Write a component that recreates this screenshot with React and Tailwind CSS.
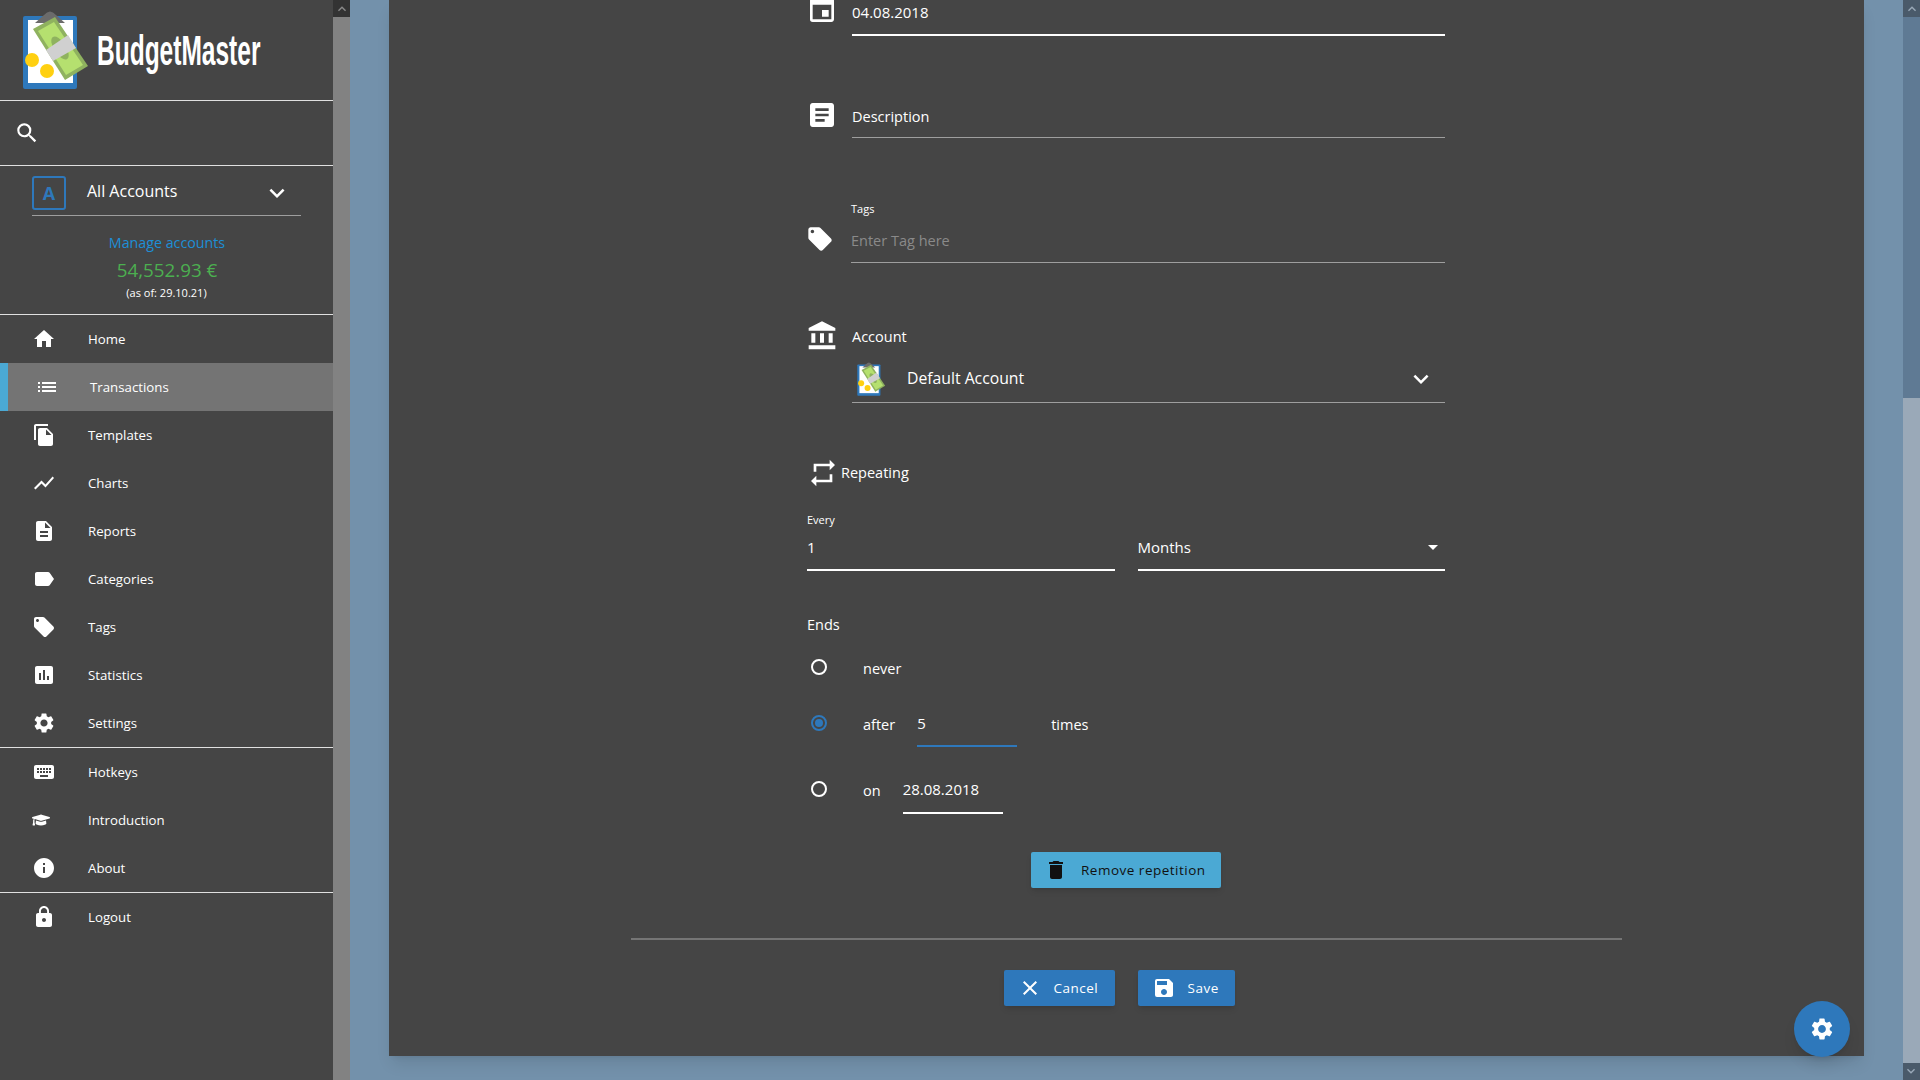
import React from "react";
import {
  MdHome, MdList, MdFileCopy, MdShowChart, MdDescription, MdLabel, MdLocalOffer,
  MdInsertChart, MdSettings, MdKeyboard, MdInfo, MdLock, MdSearch, MdExpandMore,
  MdEvent, MdArticle, MdAccountBalance, MdRepeat, MdArrowDropDown, MdDelete, MdClear, MdSave,
  MdKeyboardArrowUp,
} from "react-icons/md";
import { FaGraduationCap } from "react-icons/fa";

const mainNav = [
  { label: "Home", icon: MdHome },
  { label: "Transactions", icon: MdList, active: true },
  { label: "Templates", icon: MdFileCopy },
  { label: "Charts", icon: MdShowChart },
  { label: "Reports", icon: MdDescription },
  { label: "Categories", icon: MdLabel },
  { label: "Tags", icon: MdLocalOffer },
  { label: "Statistics", icon: MdInsertChart },
  { label: "Settings", icon: MdSettings },
];

const helpNav = [
  { label: "Hotkeys", icon: MdKeyboard },
  { label: "Introduction", icon: FaGraduationCap, small: true },
  { label: "About", icon: MdInfo },
];

// clipboard with banknote, coordinates taken from the header logo
function Logo({ className }) {
  return (
    <svg viewBox="20 8 70 84" className={className}>
      <rect x="23" y="16" width="54" height="73" rx="2" fill="#2e78bb" />
      <rect x="28" y="20" width="45" height="63" fill="#ffffff" />
      <path d="M35 23 L44 15 Q50 8 56 15 L65 23 Z" fill="#6b6b6b" />
      <circle cx="32" cy="60" r="7" fill="#ffd011" />
      <circle cx="47" cy="71" r="7" fill="#ffd011" />
      <path d="M33 29 L55 17 L88 66 L65 80 Z" fill="#8fb25f" />
      <path d="M38 31 L54 22 L83 65 L66 75 Z" fill="#b5e06f" />
      <ellipse cx="60" cy="48" rx="6" ry="13" transform="rotate(-33 60 48)" fill="#8fb25f" />
      <path d="M46 50 L68 35 L76 48 L53 61 Z" fill="#d0d0d0" />
    </svg>
  );
}

function NavItem({ item }) {
  const Icon = item.icon;
  return (
    <a
      className={`flex h-[48px] items-center text-[13.25px] font-medium text-white ${
        item.active ? "border-l-[8px] border-[#4ba9d4] bg-[#747474] pl-[27px]" : "pl-[32px]"
      }`}
    >
      <span className="flex w-[24px] justify-center">
        <Icon size={item.small ? 18 : 24} className={item.small ? "-ml-[6px]" : ""} />
      </span>
      <span className={`mt-[2px] ${item.active ? "ml-[31px]" : "ml-[32px]"}`}>{item.label}</span>
    </a>
  );
}

function Radio({ checked }) {
  return (
    <span
      className={`ml-[4px] flex h-[16px] w-[16px] shrink-0 items-center justify-center rounded-full border-2 ${
        checked ? "border-[#2e78bb]" : "border-white"
      }`}
    >
      {checked && <span className="h-[8px] w-[8px] rounded-full bg-[#2e78bb]" />}
    </span>
  );
}

function Scrollbar({ track, buttonBg, thumb, thumbTop, arrow, bottom }) {
  return (
    <div className={`flex h-full w-[17px] shrink-0 flex-col ${track}`}>
      <div className={`flex h-[17px] items-center justify-center ${buttonBg}`}>
        <MdKeyboardArrowUp size={16} className={arrow} />
      </div>
      {thumb && <div className={`mt-auto ${thumbTop} ${thumb}`} />}
      {bottom && (
        <div className={`flex h-[17px] rotate-180 items-center justify-center ${buttonBg}`}>
          <MdKeyboardArrowUp size={16} className={arrow} />
        </div>
      )}
    </div>
  );
}

function Sidebar() {
  return (
    <aside className="flex h-full w-[350px] shrink-0 overflow-hidden">
      <div className="w-[333px] bg-[#454545] text-white">
        <div className="flex h-[100px] items-start pl-[20px] pt-[8px]">
          <Logo className="h-[84px] w-[70px] shrink-0" />
          <div className="ml-[7px] mt-[16px] w-[163px] shrink-0 origin-left scale-x-[0.57] whitespace-nowrap font-['Liberation_Sans'] text-[43px] leading-[52px] font-bold">
            BudgetMaster
          </div>
        </div>
        <div className="flex h-[65px] items-center border-t border-[#e0e0e0] pl-[14px]">
          <MdSearch size={26} />
        </div>
        <div className="h-[149px] border-t border-[#e0e0e0] text-center">
          <div className="mx-[32px] mt-[10px] flex h-[40px] items-start border-b border-[#9e9e9e] pb-[5px]">
            <span className="flex h-[34px] w-[34px] items-center justify-center rounded-[3px] border-2 border-[#2e78bb] text-[18px] font-bold text-[#2e78bb]">
              A
            </span>
            <span className="ml-[21px] text-[16px] leading-[30px]">All Accounts</span>
            <MdExpandMore size={30} className="ml-auto mr-[9px] mt-[2px]" />
          </div>
          <div className="mt-[17px] pl-[1px] text-[14.25px] leading-[20px] text-[#1d8fd6]">Manage accounts</div>
          <div className="mt-[4px] pl-[1px] text-[18.75px] leading-[26px] text-[#4caf50]">54,552.93 €</div>
          <div className="mt-[2px] text-[11px] leading-[16px]">(as of: 29.10.21)</div>
        </div>
        <nav className="border-t border-[#e0e0e0]">
          {mainNav.map((item) => (
            <NavItem key={item.label} item={item} />
          ))}
        </nav>
        <nav className="border-t border-[#e0e0e0]">
          {helpNav.map((item) => (
            <NavItem key={item.label} item={item} />
          ))}
        </nav>
        <nav className="border-t border-[#e0e0e0]">
          <NavItem item={{ label: "Logout", icon: MdLock }} />
        </nav>
      </div>
      <Scrollbar track="bg-[#828282]" buttonBg="bg-[#333333]" arrow="text-[#8a8a8a]" />
    </aside>
  );
}

function EditForm() {
  return (
    <div className="-mt-[6px] ml-[418px] w-[638px] text-[14.5px] text-white">
      {/* date */}
      <div className="flex h-[42px]">
        <MdEvent size={32} className="-ml-[1px] shrink-0" />
        <div className="ml-[14px] flex-1 border-b-2 border-white pt-[5px] text-[15px] leading-[26px]">04.08.2018</div>
      </div>

      {/* description */}
      <div className="mt-[67px] flex h-[35px]">
        <MdArticle size={32} className="-ml-[1px] -mt-[4px] shrink-0" />
        <div className="ml-[14px] flex-1 border-b border-[#9e9e9e] pt-[1px] leading-[26px]">Description</div>
      </div>

      {/* tags */}
      <div className="mt-[63px] flex h-[62px]">
        <MdLocalOffer size={28} className="-ml-[1px] mt-[24px] shrink-0" />
        <div className="ml-[17px] flex-1 border-b border-[#9e9e9e]">
          <div className="text-[11px] leading-[16px]">Tags</div>
          <div className="mt-[12px] leading-[24px] text-[#8a8a8a]">Enter Tag here</div>
        </div>
      </div>

      {/* account */}
      <div className="mt-[58px] flex h-[82px]">
        <MdAccountBalance size={32} className="-ml-[1px] -mt-[1px] shrink-0" />
        <div className="ml-[14px] flex-1 border-b border-[#9e9e9e]">
          <div className="pt-[3px] leading-[26px]">Account</div>
          <div className="mt-[11px] flex h-[36px] items-center">
            <Logo className="ml-[4px] h-[36px] w-[30px] shrink-0" />
            <span className="ml-[21px] text-[15.75px]">Default Account</span>
            <MdExpandMore size={30} className="ml-auto mr-[9px]" />
          </div>
        </div>
      </div>

      {/* repeating */}
      <div className="mt-[54px] flex h-[32px] items-center">
        <MdRepeat size={32} className="shrink-0" />
        <span className="ml-[2px]">Repeating</span>
      </div>
      <div className="mt-[23px] flex h-[59px] gap-[23px]">
        <div className="flex-1 border-b-2 border-white">
          <div className="text-[11px] leading-[16px]">Every</div>
          <div className="mt-[7px] text-[15px] leading-[24px]">1</div>
        </div>
        <div className="flex flex-1 items-end border-b-2 border-white pb-[10px]">
          <span className="text-[15px] leading-[24px]">Months</span>
          <MdArrowDropDown size={24} className="ml-auto" />
        </div>
      </div>

      {/* ends */}
      <div className="mt-[42px] leading-[24px]">Ends</div>
      <div className="mt-[22px] flex h-[56px] items-start">
        <Radio />
        <span className="ml-[36px] -mt-[2px] leading-[24px]">never</span>
      </div>
      <div className="flex h-[66px] items-start">
        <Radio checked />
        <span className="ml-[36px] -mt-[2px] leading-[24px]">after</span>
        <div className="ml-[22px] -mt-[4px] h-[36px] w-[100px] border-b-2 border-[#2e78bb] text-[15px] leading-[24px]">5</div>
        <span className="ml-[34px] -mt-[2px] leading-[24px]">times</span>
      </div>
      <div className="flex h-[50px] items-start">
        <Radio />
        <span className="ml-[36px] -mt-[2px] leading-[24px]">on</span>
        <div className="ml-[22px] -mt-[4px] h-[37px] w-[100px] border-b-2 border-white text-[15px] leading-[24px]">28.08.2018</div>
      </div>

      {/* remove */}
      <div className="mt-[21px] flex justify-center">
        <button className="flex h-[36px] w-[190px] items-center rounded-[2px] bg-[#4ba9d4] pl-[13px] text-[13.5px] font-medium tracking-[0.5px] text-[#111111] shadow-md">
          <MdDelete size={24} className="mr-[13px] shrink-0" />
          Remove repetition
        </button>
      </div>
    </div>
  );
}

function MainContent() {
  return (
    <main className="flex h-full min-w-0 flex-1 bg-[#7391ab]">
      <div className="relative ml-[39px] mr-[39px] h-[1056px] flex-1 bg-[#454545] shadow-lg">
        <EditForm />
        <hr className="mx-auto mt-[50px] w-[991px] border-t-2 border-[#757575]" />
        <div className="mt-[30px] flex justify-center gap-[23px] pr-[15px] text-[13.5px] font-medium tracking-[0.5px] text-white">
          <button className="flex h-[36px] w-[111px] items-center rounded-[2px] bg-[#2e78bb] pl-[14px] shadow-md">
            <MdClear size={24} className="mr-[12px]" />
            Cancel
          </button>
          <button className="flex h-[36px] w-[97px] items-center rounded-[2px] bg-[#2e78bb] pl-[14px] shadow-md">
            <MdSave size={24} className="mr-[12px]" />
            Save
          </button>
        </div>
        <button className="absolute right-[14px] bottom-0 flex h-[56px] w-[56px] translate-y-[1px] items-center justify-center rounded-full bg-[#2e78bb] text-white shadow-lg">
          <MdSettings size={26} />
        </button>
      </div>
    </main>
  );
}

export default function App() {
  return (
    <div className="flex h-screen w-full overflow-hidden font-['Open_Sans','Noto_Sans',sans-serif]">
      <Sidebar />
      <MainContent />
      <Scrollbar
        track="bg-[#5f7a94]"
        buttonBg="bg-[#4a5a6a]"
        arrow="text-[#9aa9b8]"
        thumb="bg-[#9aa9b8]"
        thumbTop="h-[665px]"
        bottom
      />
    </div>
  );
}
